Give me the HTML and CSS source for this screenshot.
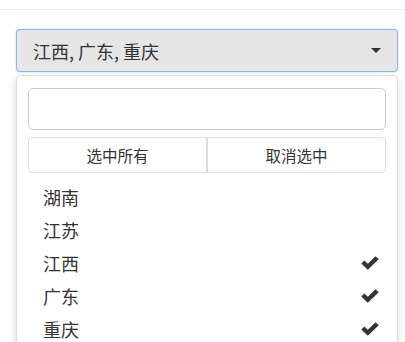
FILE: index.html
```html
<!DOCTYPE html>
<html lang="zh">
<head>
    <meta charset="UTF-8">
    <title>多选下拉</title>
    <link rel="stylesheet" href="styles.css">
</head>
<body>
    <div class="topbar"></div>
    <div class="picker">
        <button type="button" class="picker-toggle">
            <span class="picker-value">江西, 广东, 重庆</span>
            <span class="caret"></span>
        </button>
        <div class="picker-menu">
            <div class="menu-head">
                <input type="text" class="search">
                <div class="actions">
                    <div class="action">选中所有</div>
                    <div class="action">取消选中</div>
                </div>
            </div>
            <ul class="items">
                <li class="item">湖南</li>
                <li class="item">江苏</li>
                <li class="item selected">江西</li>
                <li class="item selected">广东</li>
                <li class="item selected">重庆</li>
            </ul>
        </div>
    </div>
    <script>
        // mark chosen items with a check
        document.querySelectorAll('.item.selected').forEach(item => {
            item.insertAdjacentHTML('beforeend',
                '<svg class="check" viewBox="0 0 18 14"><path d="M0.3 7.6 L3.4 4.5 L6.8 7.8 L14.6 0.2 L17.7 3.3 L6.8 13.8 Z"/></svg>');
        });
    </script>
</body>
</html>
```

FILE: styles.css
```css
body {
    margin: 0;
    font-family: "Noto Sans CJK SC", "Liberation Sans", sans-serif;
    color: #333;
    background: #fff;
    overflow: hidden;
}

.topbar {
    height: 9px;
    border-bottom: 1px solid #eee;
}

.picker {
    margin: 19px 7px 0 16px;
}

.picker-toggle {
    display: flex;
    align-items: center;
    justify-content: space-between;
    width: 100%;
    height: 43px;
    padding: 0 16px 0 16px;
    background: #e6e6e6;
    border: 1px solid #8fb6ea;
    border-radius: 4px;
    box-shadow: 0 0 2px rgba(102, 175, 233, 0.6);
    font-family: inherit;
    font-size: 18px;
    color: #333;
    box-sizing: border-box;
}

.caret {
    width: 0;
    height: 0;
    border-top: 5px solid #333;
    border-left: 5px solid transparent;
    border-right: 5px solid transparent;
}

.picker-menu {
    margin-top: 3px;
    background: #fff;
    border: 1px solid #ddd;
    border-radius: 4px;
    box-shadow: 0 4px 8px rgba(0, 0, 0, 0.15);
    height: 400px;
}

.menu-head {
    padding: 12px 11px 0;
}

.search {
    display: block;
    width: 100%;
    height: 42px;
    box-sizing: border-box;
    border: 1px solid #ccc;
    border-radius: 5px;
    margin: 0;
}

.actions {
    display: flex;
    margin-top: 7px;
    height: 36px;
    border: 1px solid #ddd;
    border-radius: 4px;
    box-sizing: border-box;
}

.action {
    flex: 1;
    display: flex;
    align-items: center;
    justify-content: center;
    font-size: 15.5px;
}

.action + .action {
    border-left: 2px solid #ddd;
}

.items {
    list-style: none;
    margin: 7px 0 0;
    padding: 0;
}

.item {
    display: flex;
    align-items: center;
    justify-content: space-between;
    height: 33px;
    padding: 0 18px 0 26px;
    font-size: 18px;
}

.check {
    width: 18px;
    height: 14px;
    fill: #333;
}
```
